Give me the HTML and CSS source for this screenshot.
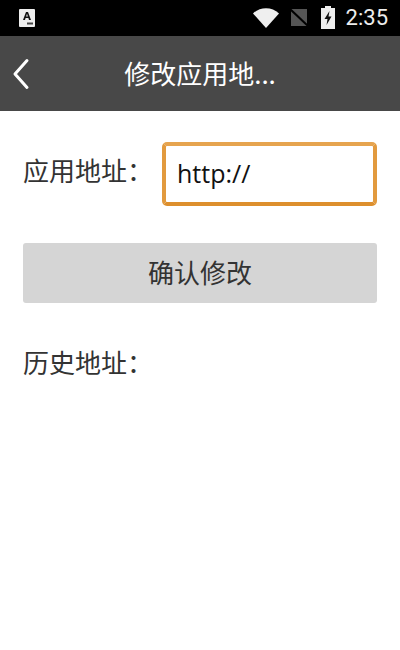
FILE: index.html
```html
<!DOCTYPE html>
<html lang="zh-CN">
<head>
<meta charset="utf-8">
<title>修改应用地址</title>
<link rel="stylesheet" href="styles.css">
</head>
<body>
<div class="phone">
  <div class="status">
    <svg class="notif" width="16" height="18" viewBox="0 0 16 18">
      <rect x="0" y="0" width="16" height="18" rx="1" fill="#eee"/>
      <path d="M4 11 L7 3 H9 L12 11 H10 L9.4 9 H6.6 L6 11 Z M7.1 7.5 H8.9 L8 4.8 Z" fill="#111" fill-rule="evenodd"/>
      <rect x="8" y="13.5" width="6" height="2" fill="#444"/>
    </svg>
    <div class="status-right">
      <svg class="wifi" width="26" height="20" viewBox="0 0 26 20"><path d="M0 5.5 C7 -1.5 19 -1.5 26 5.5 L13 20 Z" fill="#efefef"/></svg>
      <svg class="sim" width="20" height="19" viewBox="0 0 20 19">
        <rect x="2" y="1" width="16" height="17" fill="#555"/>
        <path d="M0.5 0.5 L19.5 18.5" stroke="#000" stroke-width="2"/>
      </svg>
      <svg class="battery" width="14" height="23" viewBox="0 0 14 23">
        <path d="M4 0 H10 V2 H14 V23 H0 V2 H4 Z" fill="#eee"/>
        <path d="M8.5 5 L3.5 13 H6.5 L5.5 19 L10.5 10.5 H7.5 Z" fill="#111"/>
      </svg>
      <span class="clock">2:35</span>
    </div>
  </div>
  <header class="bar">
    <svg class="back" width="18" height="32" viewBox="0 0 18 32"><path d="M15 2.5 L3 16 L15 29.5" fill="none" stroke="#fff" stroke-width="3" stroke-linecap="round" stroke-linejoin="round"/></svg>
    <h1 class="title">修改应用地...</h1>
  </header>
  <main class="content">
    <div class="row">
      <span class="label">应用地址：</span>
      <div class="input">http://</div>
    </div>
    <button class="confirm">确认修改</button>
    <div class="label history">历史地址：</div>
  </main>
</div>
</body>
</html>
```
FILE: styles.css
```css
* { box-sizing: border-box; }
html, body { margin: 0; padding: 0; }
body { background: #fff; font-family: "Noto Sans CJK SC", "Roboto", sans-serif; }
.phone { width: 400px; height: 650px; overflow: hidden; background: #fff; }
.status { height: 36px; background: #000; display: flex; align-items: center; justify-content: space-between; padding: 0 12px 0 19px; }
.notif { margin-top: -1px; }
.status-right { display: flex; align-items: center; }
.wifi { margin-right: 10px; margin-top: -1px; }
.sim { margin-right: 12px; margin-top: -1px; }
.battery { margin-right: 11px; margin-top: -1px; }
.clock { font-family: "Roboto", sans-serif; font-size: 22px; color: #ededed; line-height: 36px; }
.bar { height: 75px; background: #484848; display: flex; align-items: center; position: relative; justify-content: center; }
.back { position: absolute; left: 12px; top: 22px; }
.title { margin: 0; font-size: 26px; font-weight: 400; color: #fff; line-height: 73px; padding-bottom: 2px; }
.content { padding: 31px 23px 0; }
.row { display: flex; align-items: center; justify-content: space-between; height: 64px; }
.label { font-size: 26px; color: #333; line-height: 36px; }
.row .label { margin-top: -8px; }
.input { width: 215px; height: 64px; border: 4px solid #e29a3e; border-top-color: #e6a44f; border-bottom-color: #dd8f2d; border-radius: 5px; background: #fff; font-family: "Open Sans", sans-serif; font-size: 25px; color: #111; line-height: 55px; padding-left: 11px; }
.confirm { display: block; width: 354px; height: 60px; margin-top: 37px; border: 0; border-radius: 3px; background: #d5d5d5; color: #333; font-family: inherit; font-size: 26px; padding: 0 0 3px; }
.history { margin-top: 41px; }
```
